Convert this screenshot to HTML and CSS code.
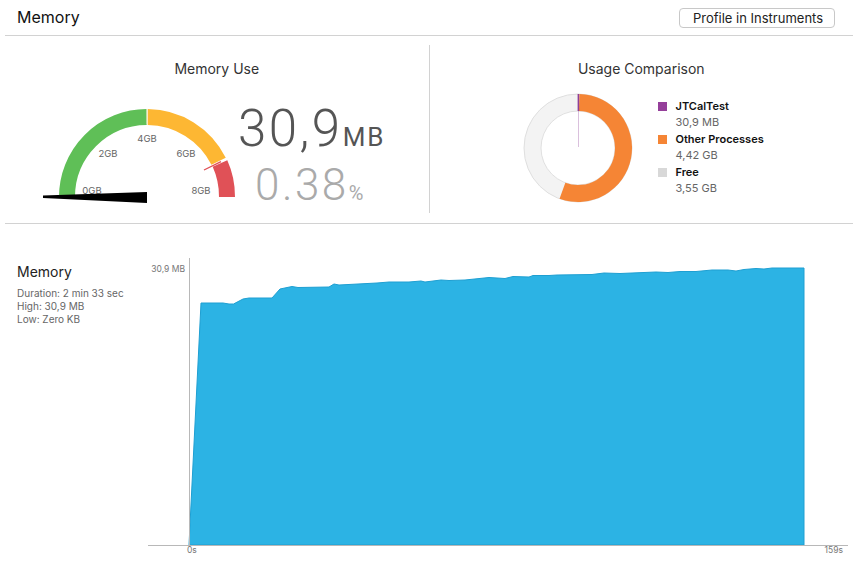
FILE: index.html
```html
<!DOCTYPE html>
<html lang="en">
<head>
    <meta charset="UTF-8">
    <title>Memory</title>
    <link rel="stylesheet" href="styles.css">
</head>
<body>
    <div class="header">
        <h1 class="title">Memory</h1>
        <button class="btn">Profile in Instruments</button>
    </div>

    <div class="overview">
        <div class="column">
            <h2 class="col-title">Memory Use</h2>
            <div class="gauge-row">
                <svg class="gauge" width="200" height="110" viewBox="40 100 200 110">
                    <path d="M67 197 A80 80 0 0 1 146.6 117" fill="none" stroke="#5fbf57" stroke-width="16"/>
                    <path d="M147.8 117 A80 80 0 0 1 218.6 161.3" fill="none" stroke="#fdb733" stroke-width="16"/>
                    <path d="M220 163.6 A80 80 0 0 1 227 197" fill="none" stroke="#e05157" stroke-width="16"/>
                    <line x1="147.2" y1="109" x2="147.2" y2="124" stroke="#f9e6bb" stroke-width="1"/>
                    <line x1="204" y1="170" x2="221" y2="161.6" stroke="#e05157" stroke-width="1.3"/>
                    <g class="gauge-label">
                        <text x="147" y="142" text-anchor="middle">4GB</text>
                        <text x="108" y="157" text-anchor="middle">2GB</text>
                        <text x="186" y="157" text-anchor="middle">6GB</text>
                        <text x="92" y="194" text-anchor="middle">0GB</text>
                        <text x="201" y="194" text-anchor="middle">8GB</text>
                    </g>
                    <polygon points="43,195.5 147,192 147,203 43,198" fill="#000"/>
                </svg>
                <div class="numbers">
                    <div class="big">30,9<span class="unit">MB</span></div>
                    <div class="pct">0.38<span class="unit-pct">%</span></div>
                </div>
            </div>
        </div>

        <div class="divider"></div>

        <div class="column">
            <h2 class="col-title">Usage Comparison</h2>
            <div class="usage-row">
                <svg class="donut" width="116" height="116" viewBox="520 90 116 116">
                    <circle cx="578" cy="148" r="45.5" fill="none" stroke="#f3f3f3" stroke-width="17"/>
                    <circle cx="578" cy="148" r="54" fill="none" stroke="#d9d9d9" stroke-width="0.8"/>
                    <circle cx="578" cy="148" r="37" fill="none" stroke="#d9d9d9" stroke-width="0.8"/>
                    <path d="M579.41 94.02 A54 54 0 1 1 559.53 198.74 L565.35 182.77 A37 37 0 1 0 578.97 111.01 Z" fill="#f58535"/>
                    <line x1="578.4" y1="94" x2="578.4" y2="111" stroke="#8e3f98" stroke-width="1.6"/>
                    <line x1="578.4" y1="111" x2="578.4" y2="147" stroke="#8e3f98" stroke-width="0.8" opacity="0.45"/>
                </svg>
                <div class="legend">
                    <div class="legend-item">
                        <div class="legend-name"><span class="swatch purple"></span>JTCalTest</div>
                        <div class="legend-value">30,9 MB</div>
                    </div>
                    <div class="legend-item">
                        <div class="legend-name"><span class="swatch orange"></span>Other Processes</div>
                        <div class="legend-value">4,42 GB</div>
                    </div>
                    <div class="legend-item">
                        <div class="legend-name"><span class="swatch grey"></span>Free</div>
                        <div class="legend-value">3,55 GB</div>
                    </div>
                </div>
            </div>
        </div>
    </div>

    <div class="detail">
        <div class="info">
            <h2 class="info-title">Memory</h2>
            <div class="info-text">Duration: 2 min 33 sec</div>
            <div class="info-text">High: 30,9 MB</div>
            <div class="info-text">Low: Zero KB</div>
        </div>
        <svg class="chart" width="713" height="312" viewBox="140 250 713 312">
            <polygon fill="#2cb3e4" stroke="#1e9fd2" stroke-width="1" stroke-linejoin="round"
                points="189,545 201,303 223,303 229,304 233.5,304 243,299 249,298 272,298 280,289 292,286.5 298,287.5 329,287 334,284 339,285 377,283 389,282 409,282 421,281 425,282 441,280 449,280.5 465,280 489,277.5 505,278.5 513,276.5 529,277 533,275.5 549,275.5 557,275 592,274.5 604,273 620,273.5 632,273 656,272 668,272.5 680,271.5 696,271.5 712,270 728,270 736,271 744,269.5 756,268.5 764,269 772,268 804,268 804,545"/>
            <line x1="189.5" y1="258" x2="189.5" y2="546" stroke="#b8b8b8" stroke-width="1"/>
            <line x1="148" y1="545.5" x2="848" y2="545.5" stroke="#b8b8b8" stroke-width="1"/>
            <g class="axis-label">
                <text x="185" y="271.5" text-anchor="end">30,9 MB</text>
                <text x="187" y="552.5">0s</text>
                <text x="843" y="552.5" text-anchor="end">159s</text>
            </g>
        </svg>
    </div>
</body>
</html>
```

FILE: styles.css
```css
body {
    margin: 0;
    font-family: 'Inter', 'Liberation Sans', sans-serif;
    background-color: #fff;
    color: #222;
}

.header {
    display: flex;
    justify-content: space-between;
    align-items: center;
    height: 35px;
    margin: 0 6px 0 5px;
    padding: 0 18px 0 12px;
    border-bottom: 1px solid #d2d2d2;
}

.title {
    margin: 0 0 1px;
    font-size: 16px;
    font-weight: 400;
    color: #111;
}

.btn {
    width: 156px;
    height: 20px;
    padding: 0 0 0 2px;
    font-family: inherit;
    font-size: 13px;
    color: #222;
    background-color: #fff;
    border: 1px solid #c8c8c8;
    border-radius: 4px;
}

.overview {
    display: flex;
    height: 187px;
    margin: 0 6px 0 5px;
    border-bottom: 1px solid #d2d2d2;
}

.column {
    flex: 1;
    padding-top: 24px;
}

.divider {
    width: 1px;
    margin: 9px 0 10px;
    background-color: #d2d2d2;
}

.col-title {
    margin: 0;
    font-size: 14px;
    line-height: 17px;
    font-weight: 400;
    text-align: center;
    color: #333;
}

.gauge-row {
    display: flex;
    align-items: flex-start;
    padding-left: 35px;
    margin-top: 23px;
}

.gauge-label text {
    font-family: 'Inter', 'Liberation Sans', sans-serif;
    font-size: 9.5px;
    fill: #666;
}

.numbers {
    margin-top: 9px;
    margin-left: -2px;
    font-family: 'Roboto', 'Liberation Sans', sans-serif;
    font-weight: 300;
}

.big {
    font-size: 51px;
    line-height: 40px;
    letter-spacing: 2.5px;
    color: #555;
}

.unit {
    font-size: 26px;
    font-weight: 400;
    letter-spacing: 2px;
}

.pct {
    font-size: 44px;
    line-height: 56px;
    letter-spacing: 2.5px;
    color: #aaa;
    padding-left: 17px;
}

.unit-pct {
    font-size: 20px;
    font-weight: 400;
    letter-spacing: 0;
}

.usage-row {
    display: flex;
    align-items: flex-start;
    padding-left: 90px;
    margin-top: 13px;
}

.legend {
    margin-top: 8px;
    margin-left: 22px;
    font-size: 11px;
}

.legend-item {
    margin-bottom: 1px;
}

.legend-name {
    display: flex;
    align-items: center;
    line-height: 16px;
    font-weight: 600;
    color: #111;
}

.legend-value {
    line-height: 16px;
    padding-left: 18px;
    color: #666;
}

.swatch {
    width: 9px;
    height: 9px;
    margin-right: 9px;
}

.purple {
    background-color: #953f9a;
}

.orange {
    background-color: #f58535;
}

.grey {
    background-color: #d8d8d8;
}

.detail {
    display: flex;
    margin: 0 6px 0 5px;
}

.info {
    flex-shrink: 0;
    width: 123px;
    padding: 39px 0 0 12px;
}

.info-title {
    margin: 0 0 7px;
    font-size: 14px;
    line-height: 17px;
    font-weight: 400;
    color: #222;
}

.info-text {
    font-size: 10px;
    line-height: 13px;
    color: #666;
}

.chart {
    flex-shrink: 0;
    margin-top: 26px;
}

.axis-label text {
    font-family: 'Inter', 'Liberation Sans', sans-serif;
    font-size: 8.5px;
    fill: #777;
}
```
